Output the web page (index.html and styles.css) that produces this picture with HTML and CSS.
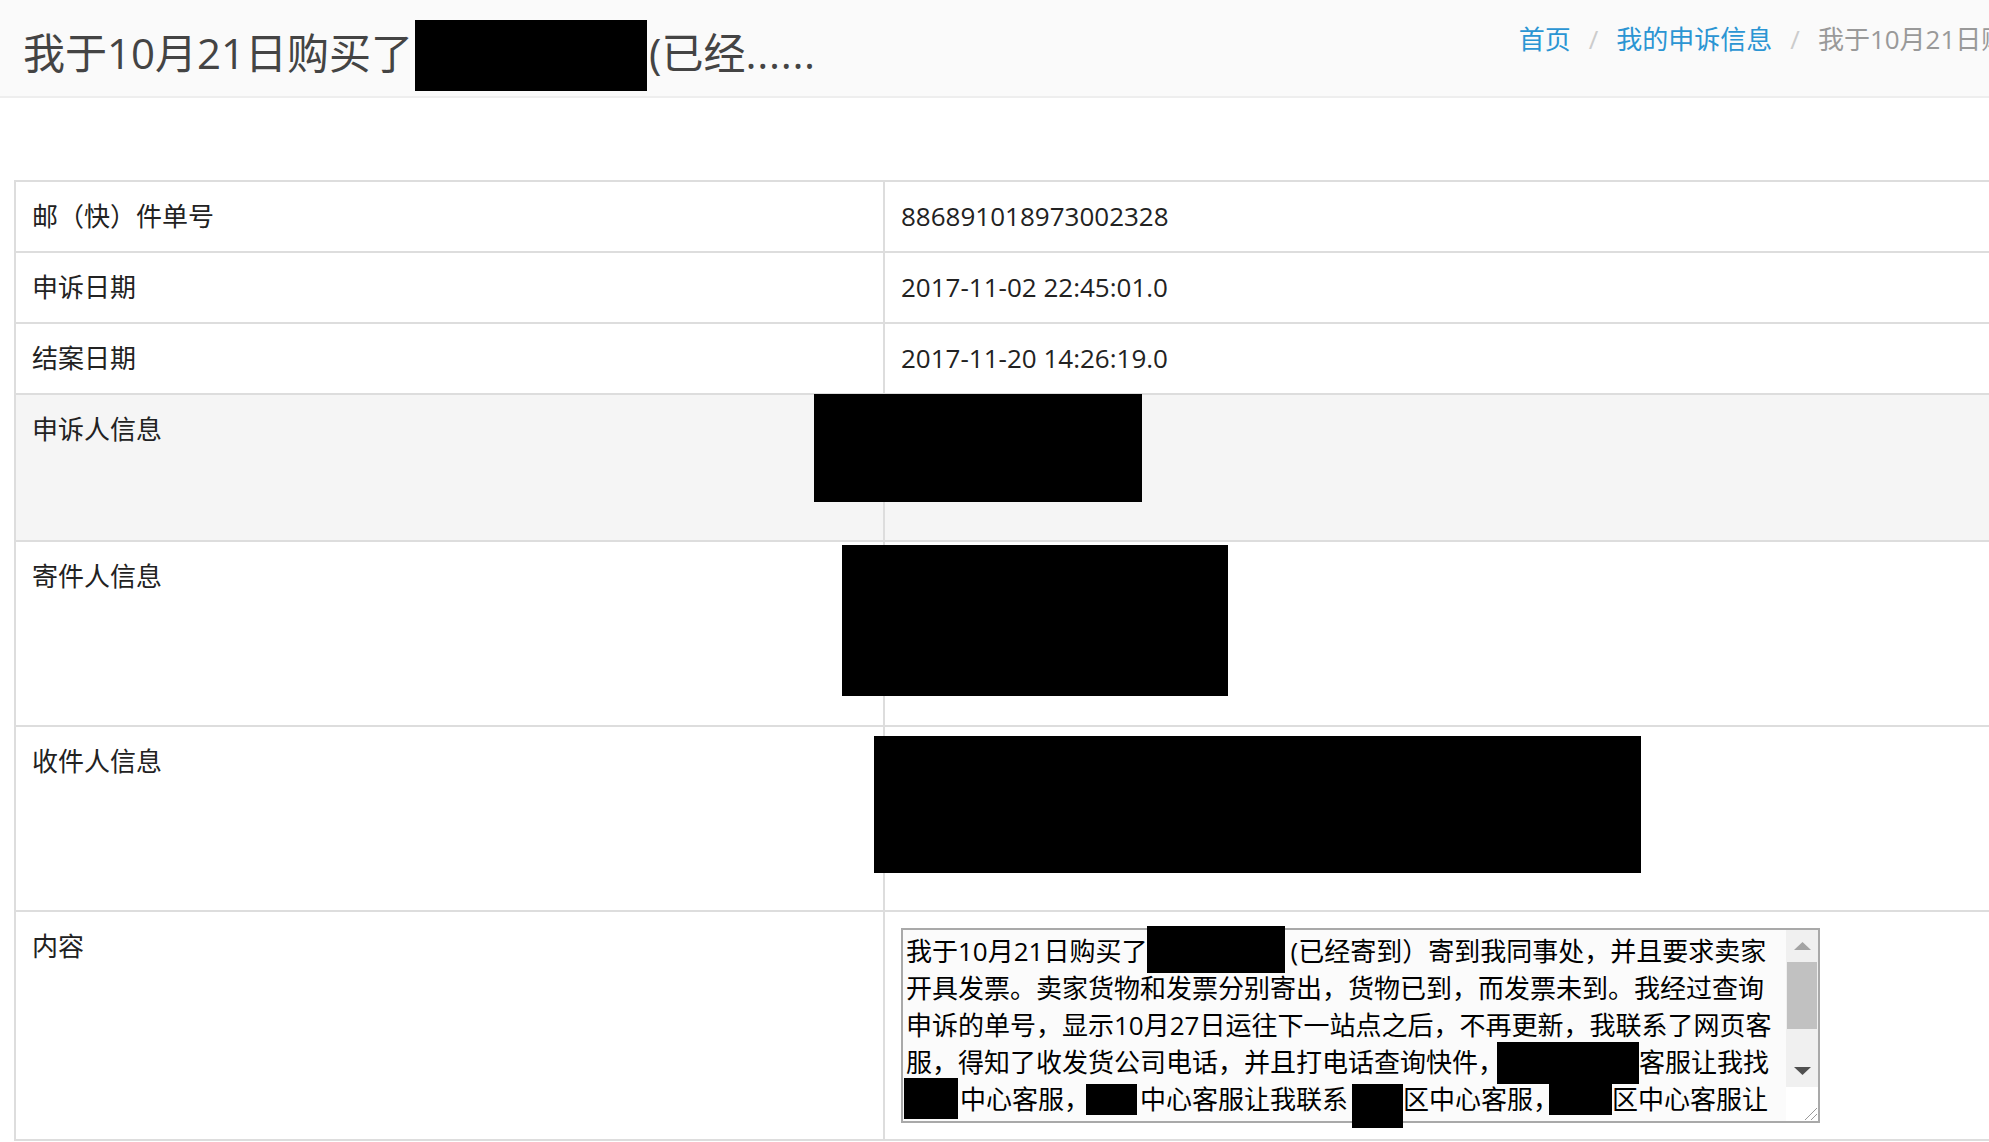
FILE: index.html
```html
<!DOCTYPE html>
<html lang="zh-CN">
<head>
<meta charset="UTF-8">
<meta name="viewport" content="width=device-width, initial-scale=1.0">
<title>申诉详情</title>
<link rel="stylesheet" href="styles.css">
</head>
<body>

<div class="page">
    <header class="content-header">
        <h1 class="title">我于10月21日购买了<span class="redact r-title"></span>(已经<span class="dots">......</span></h1>
        <ol class="breadcrumb">
            <li><a href="#">首页</a></li>
            <li><a href="#">我的申诉信息</a></li>
            <li class="active">我于10月21日购买了(已经......</li>
        </ol>
    </header>

    <section class="content">
        <table class="detail-table">
            <colgroup>
                <col class="col-label">
                <col>
            </colgroup>
            <tbody>
                <tr>
                    <td>邮（快）件单号</td>
                    <td>886891018973002328</td>
                </tr>
                <tr>
                    <td>申诉日期</td>
                    <td>2017-11-02 22:45:01.0</td>
                </tr>
                <tr>
                    <td>结案日期</td>
                    <td>2017-11-20 14:26:19.0</td>
                </tr>
                <tr class="hover">
                    <td>申诉人信息</td>
                    <td><div class="info-block short"><span class="redact r-complainant"></span></div></td>
                </tr>
                <tr>
                    <td>寄件人信息</td>
                    <td><div class="info-block tall"><span class="redact r-sender"></span></div></td>
                </tr>
                <tr>
                    <td>收件人信息</td>
                    <td><div class="info-block tall"><span class="redact r-receiver"></span></div></td>
                </tr>
                <tr>
                    <td>内容</td>
                    <td>
                        <!-- readonly textarea, drawn by hand so the scrollbar looks like the original -->
                        <div class="textbox">
                            <div class="textbox-text">
                                <div class="line">我于10月21日购买了<span class="redact r-t1"></span>(已经寄到）寄到我同事处，并且要求卖家</div>
                                <div class="line">开具发票。卖家货物和发票分别寄出，货物已到，而发票未到。我经过查询</div>
                                <div class="line">申诉的单号，显示10月27日运往下一站点之后，不再更新，我联系了网页客</div>
                                <div class="line">服，得知了收发货公司电话，并且打电话查询快件，<span class="redact r-t4"></span>客服让我找</div>
                                <div class="line"><span class="redact r-t5a"></span>中心客服，<span class="redact r-t5b"></span>中心客服让我联系<span class="redact r-t5c"></span>区中心客服，<span class="redact r-t5d"></span>区中心客服让</div>
                            </div>
                            <div class="scrollbar">
                                <div class="sb-button">
                                    <svg width="17" height="8" viewBox="0 0 17 8"><polygon points="0,8 8.5,0 17,8" fill="#a3a3a3"/></svg>
                                </div>
                                <div class="sb-track">
                                    <div class="sb-thumb"></div>
                                </div>
                                <div class="sb-button">
                                    <svg width="17" height="8" viewBox="0 0 17 8"><polygon points="0,0 17,0 8.5,8" fill="#505050"/></svg>
                                </div>
                                <div class="sb-corner">
                                    <svg width="32" height="34" viewBox="0 0 32 34">
                                        <line x1="19" y1="33" x2="31" y2="21" stroke="#9a9a9a" stroke-width="1"/>
                                        <line x1="25" y1="33" x2="31" y2="27" stroke="#9a9a9a" stroke-width="1"/>
                                    </svg>
                                </div>
                            </div>
                        </div>
                    </td>
                </tr>
            </tbody>
        </table>
    </section>
</div>

</body>
</html>
```

FILE: styles.css
```css
html, body {
    overflow: hidden;
}
body {
    margin: 0;
    padding: 0;
    background-color: #fff;
    color: #222;
    font-family: "Open Sans", "Noto Sans CJK SC", sans-serif;
    font-size: 26px;
    line-height: 37px;
}
.page {
    width: 2176px;
}

/* header */
.content-header {
    display: flex;
    justify-content: space-between;
    align-items: flex-start;
    padding: 21px 16px 19px 23px;
    background-color: #fafafa;
    border-bottom: 2px solid #eee;
}
.title {
    margin: 8px 0 0;
    font-size: 42px;
    line-height: 48px;
    font-weight: normal;
    color: #444;
    white-space: nowrap;
}
.title .dots {
    letter-spacing: 0.7px;
}
.breadcrumb {
    display: flex;
    margin: 0;
    padding: 0;
    list-style: none;
    white-space: nowrap;
}
.breadcrumb li + li::before {
    content: "/";
    padding: 0 18px;
    color: #ccc;
}
.breadcrumb a {
    color: #2b95d3;
    text-decoration: none;
}
.breadcrumb .active {
    color: #999;
}

/* redaction boxes */
.redact {
    display: inline-block;
    vertical-align: top;
    background-color: #000;
}
.r-title {
    width: 232px;
    height: 71px;
    margin: -9px 2px -14px 2px;
}

/* table */
.content {
    padding: 82px 14px 0;
}
.detail-table {
    width: 2148px;
    table-layout: fixed;
    border-collapse: separate;
    border-spacing: 0;
    border-top: 2px solid #ddd;
    border-left: 2px solid #ddd;
}
.col-label {
    width: 869px;
}
.detail-table td {
    padding: 16px;
    vertical-align: top;
    border-right: 2px solid #ddd;
    border-bottom: 2px solid #ddd;
}
.detail-table tr.hover td {
    background-color: #f5f5f5;
}
.info-block {
    position: relative;
}
.info-block.short {
    height: 113px;
}
.info-block.tall {
    height: 151px;
}
.info-block .redact {
    position: absolute;
}
.r-complainant {
    left: -87px;
    top: -17px;
    width: 328px;
    height: 108px;
}
.r-sender {
    left: -59px;
    top: -13px;
    width: 386px;
    height: 151px;
}
.r-receiver {
    left: -27px;
    top: -7px;
    width: 767px;
    height: 137px;
}

/* textarea */
.textbox {
    display: flex;
    box-sizing: border-box;
    width: 919px;
    height: 195px;
    border: 2px solid #a9a9a9;
    background-color: #fbfbfb;
    color: #000;
}
.textbox-text {
    flex: 1;
    padding: 3px 0 0 3px;
}
.line {
    height: 37px;
    white-space: nowrap;
}
.r-t1 {
    width: 138px;
    height: 47px;
    margin: -7px 5px -3px 0;
}
.r-t4 {
    width: 142px;
    height: 42px;
    margin: -2px 0 -3px -7px;
}
.r-t5a {
    width: 54px;
    height: 41px;
    margin: -3px 2px -1px -2px;
}
.r-t5b {
    width: 51px;
    height: 31px;
    margin: 3px 3px 3px -4px;
}
.r-t5c {
    width: 51px;
    height: 44px;
    margin: 3px 0 -10px 4px;
}
.r-t5d {
    width: 63px;
    height: 31px;
    margin: 3px 0 3px -10px;
}
.scrollbar {
    display: flex;
    flex-direction: column;
    width: 32px;
    background-color: #f0f0f0;
}
.sb-button {
    display: flex;
    align-items: center;
    justify-content: center;
    height: 32px;
}
.sb-track {
    flex: 1;
}
.sb-thumb {
    height: 67px;
    margin: 0 1px;
    background-color: #c1c1c1;
}
.sb-corner {
    height: 34px;
    background-color: #fff;
}
.sb-corner svg {
    display: block;
}
```
